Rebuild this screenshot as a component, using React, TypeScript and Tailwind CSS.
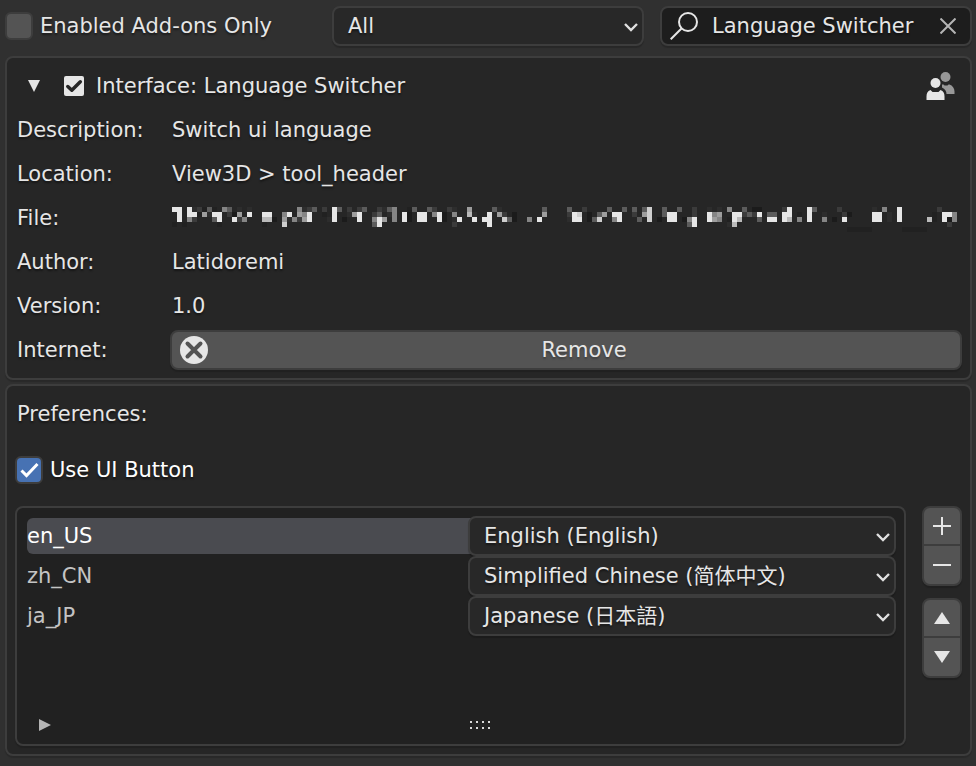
import { useState } from "react";

type Cell = [column: number, level: number];

// Brightness of each block of the obscured path, row by row.
const pathRows: Cell[][] = [
  [[0, 9], [1, 9], [3, 9], [4, 2], [5, 3], [6, 1], [7, 4], [8, 1], [10, 5], [11, 4], [13, 2], [15, 2], [25, 5], [26, 2], [27, 3], [28, 4], [30, 3], [32, 9], [33, 4], [35, 3], [37, 3], [38, 4], [41, 3], [42, 2], [43, 4], [44, 5], [47, 1], [48, 4], [51, 4], [52, 3], [55, 3], [56, 2], [59, 6], [64, 4], [65, 2], [74, 4], [79, 4], [82, 3], [87, 4], [90, 4], [92, 4], [94, 4], [95, 8], [98, 4], [101, 4], [104, 3], [107, 2], [109, 2], [111, 5], [114, 4], [116, 0], [117, 0], [122, 3], [123, 9], [127, 9], [128, 4], [133, 3], [140, 2], [142, 5], [145, 9], [153, 3]],
  [[1, 9], [3, 9], [4, 9], [5, 1], [6, 6], [7, 2], [8, 9], [9, 9], [11, 3], [12, 0], [13, 6], [15, 9], [18, 9], [19, 9], [22, 5], [23, 9], [25, 6], [26, 5], [27, 9], [30, 1], [32, 9], [35, 2], [36, 6], [37, 9], [40, 3], [41, 4], [43, 2], [44, 5], [46, 9], [47, 0], [49, 9], [50, 9], [52, 5], [53, 9], [54, 0], [56, 5], [59, 7], [60, 2], [63, 9], [65, 6], [66, 3], [68, 0], [74, 6], [79, 3], [80, 9], [81, 8], [83, 0], [85, 4], [86, 6], [88, 9], [89, 9], [92, 3], [94, 6], [95, 8], [98, 4], [99, 9], [100, 9], [104, 3], [107, 9], [108, 5], [109, 6], [112, 9], [113, 9], [114, 3], [115, 4], [116, 3], [117, 9], [119, 4], [120, 4], [122, 9], [123, 9], [125, 1], [127, 9], [130, 2], [134, 3], [135, 0], [140, 9], [141, 9], [143, 2], [145, 9], [152, 1], [154, 9], [155, 9], [156, 5]],
  [[1, 9], [3, 5], [4, 3], [8, 4], [9, 9], [12, 9], [13, 3], [14, 5], [18, 7], [19, 7], [20, 0], [22, 6], [23, 2], [24, 5], [25, 3], [26, 6], [27, 9], [31, 2], [32, 9], [34, 0], [37, 9], [40, 5], [41, 9], [42, 6], [44, 5], [46, 9], [47, 0], [49, 9], [50, 9], [53, 9], [54, 0], [56, 2], [57, 9], [60, 9], [62, 9], [63, 9], [66, 8], [67, 4], [68, 0], [71, 5], [73, 9], [79, 2], [80, 9], [81, 9], [83, 0], [84, 4], [85, 8], [88, 5], [89, 9], [93, 4], [95, 8], [97, 0], [99, 9], [100, 9], [102, 0], [103, 5], [104, 9], [107, 9], [108, 6], [109, 5], [111, 1], [112, 9], [113, 7], [117, 4], [119, 9], [120, 9], [122, 9], [123, 7], [125, 5], [127, 9], [130, 5], [132, 0], [134, 9], [140, 9], [141, 9], [143, 2], [145, 9], [151, 7], [152, 1], [154, 9], [155, 0], [156, 5]],
  [[0, 1], [2, 1], [9, 1], [18, 1], [22, 8], [40, 4], [41, 9], [56, 3], [63, 9], [103, 4], [104, 9], [111, 2], [112, 7], [155, 3]],
  [[135, 1], [136, 1], [137, 1], [138, 1], [139, 1], [146, 1], [147, 1], [148, 1], [149, 1], [150, 1]],
];

const levels = ["#1b1b1b", "#212121", "#2d2d2d", "#3b3b3b", "#5c5c5c", "#858585", "#9d9d9d", "#bababa", "#cecece", "#e6e6e6"];

function ObscuredPath() {
  return (
    <svg viewBox="0 0 785 25" className="ml-0.5 mt-0.5 block h-[25px] w-[785px] max-w-full" shapeRendering="crispEdges" role="img" aria-label="Hidden file path">
      {pathRows.map((row, y) =>
        row.map(([x, level]) => (
          <rect key={`${x}-${y}`} x={x * 5} y={y * 5} width={5} height={5} fill={levels[level]} />
        ))
      )}
    </svg>
  );
}

function Dropdown({ label, options }: { label: string; options: string[] }) {
  return (
    <div className="relative h-10">
      <select
        aria-label={label}
        className="h-10 w-full appearance-none rounded-lg border-2 border-[#3d3d3d] bg-[#282828] pl-2.5 pr-8 indent-1 text-[#e6e6e6] shadow-[0_2px_1px_rgba(0,0,0,0.18)] outline-none [text-shadow:inherit]"
      >
        {options.map((option) => (
          <option key={option}>{option}</option>
        ))}
      </select>
      <svg viewBox="0 0 14 10" className="pointer-events-none absolute right-1.5 top-4 h-2.5 w-3.5" fill="none" stroke="#e0e0e0" strokeWidth="2.400">
        <path d="M1 2l6 6 6-6" />
      </svg>
    </div>
  );
}

function InfoRow({ label, children }: { label: string; children: React.ReactNode }) {
  return (
    <div className="grid h-11 grid-cols-[155px_1fr] items-center">
      <dt className="pl-0.5">{label}</dt>
      <dd className="min-w-0">{children}</dd>
    </div>
  );
}

const languages = [
  { code: "en_US", name: "English (English)" },
  { code: "zh_CN", name: "Simplified Chinese (简体中文)" },
  { code: "ja_JP", name: "Japanese (日本語)" },
];

const panel = "rounded-lg border-2 border-[#3d3d3d] bg-[#262626] px-2 shadow-[0_2px_1px_rgba(0,0,0,0.15)]";
const buttonGroup =
  "flex flex-col divide-y-2 divide-[#3d3d3d] overflow-hidden rounded-lg border-2 border-[#3d3d3d] bg-[#545454] shadow-[0_2px_1px_rgba(0,0,0,0.15)]";
const sideButton = "flex h-[38px] items-center justify-center";

export default function App() {
  const [active, setActive] = useState("en_US");

  return (
    <main className="min-h-screen bg-[#303030] pb-2.5 pl-[5px] pr-1 pt-1.5 font-['DejaVu_Sans','Noto_Sans_CJK_SC',sans-serif] text-[21px] leading-7 text-[#e6e6e6] [text-shadow:0_2px_2px_rgba(0,0,0,0.45)]">
      <header className="grid grid-cols-[1fr_312px_312px] gap-x-4">
        <label className="flex items-center gap-[7px] whitespace-nowrap">
          <input
            type="checkbox"
            className="size-7 shrink-0 appearance-none rounded-md border-2 border-[#3d3d3d] bg-[#545454] checked:bg-[#4772b3]"
          />
          Enabled Add-ons Only
        </label>
        <Dropdown label="Category" options={["All", "Interface"]} />
        <div className="flex h-10 items-center rounded-lg border-2 border-[#3d3d3d] bg-[#1d1d1d] pl-2 pr-3.5 shadow-[0_2px_1px_rgba(0,0,0,0.18)]">
          <svg viewBox="0 0 28 28" className="size-7 shrink-0" fill="none" stroke="#e6e6e6" strokeWidth="2">
            <circle cx="18" cy="10" r="9" />
            <path d="M11.500 16.500L.7 27.300" />
          </svg>
          <input
            aria-label="Search add-ons"
            defaultValue="Language Switcher"
            className="ml-3.5 min-w-0 flex-1 bg-transparent outline-none [text-shadow:inherit]"
          />
          <button type="button" aria-label="Clear search">
            <svg viewBox="0 0 16 16" className="size-4" fill="none" stroke="#b4b4b4" strokeWidth="2">
              <path d="M.5.5l15 15M15.500.5l-15 15" />
            </svg>
          </button>
        </div>
      </header>

      <section className={`${panel} mt-2.5 py-1.5`}>
        <div className="flex h-11 items-center pr-1.5">
          <button type="button" aria-label="Collapse details" className="ml-3 flex w-3.5 justify-center">
            <svg viewBox="0 0 12 12" className="size-3" fill="#e6e6e6">
              <path d="M0 0h12L6 12z" />
            </svg>
          </button>
          <label className="ml-[23px] flex items-center gap-3">
            <span className="relative size-5">
              <input type="checkbox" defaultChecked className="peer block size-5 appearance-none rounded-[2px] bg-[#e6e6e6]" />
              <svg viewBox="0 0 20 20" className="pointer-events-none absolute inset-0 hidden size-5 peer-checked:block" fill="none" stroke="#262626" strokeWidth="3.500" strokeLinecap="round" strokeLinejoin="round">
                <path d="M3.800 10.500l4 3.700 8.500-8.400" />
              </svg>
            </span>
            Interface: Language Switcher
          </label>
          <svg viewBox="0 0 30 28" className="ml-auto h-7 w-[30px]" role="img" aria-label="Community add-on">
            <g fill="#989898">
              <circle cx="19.500" cy="5" r="5" />
              <path d="M16 12.500h1.500l1 1h3l1-1h1c3 1 5 4 5 7V22h-8c0-3-1.500-5-4.500-6.500z" />
            </g>
            <g fill="#e6e6e6">
              <circle cx="9.500" cy="11" r="5" />
              <path d="M4.500 18l2 2h6l2-2c3 .8 4 3.500 4 6.500V28H.5v-3.500c0-3 1-5.700 4-6.500z" />
            </g>
          </svg>
        </div>
        <dl>
          <InfoRow label="Description:"><span className="pl-0.5">Switch ui language</span></InfoRow>
          <InfoRow label="Location:"><span className="pl-0.5">View3D &gt; tool_header</span></InfoRow>
          <InfoRow label="File:"><ObscuredPath /></InfoRow>
          <InfoRow label="Author:"><span className="pl-0.5">Latidoremi</span></InfoRow>
          <InfoRow label="Version:"><span className="pl-0.5">1.0</span></InfoRow>
          <InfoRow label="Internet:">
            <button type="button" className="flex h-10 w-full items-center rounded-lg border-2 border-[#3d3d3d] bg-[#545454] pl-2 shadow-[0_2px_1px_rgba(0,0,0,0.15)] [text-shadow:0_2px_2px_rgba(0,0,0,0.25)]">
              <svg viewBox="0 0 28 28" className="size-7">
                <circle cx="14" cy="14" r="14" fill="#e6e6e6" />
                <path d="M7.500 7.500l13 13M20.500 7.500l-13 13" fill="none" stroke="#545454" strokeWidth="4" strokeLinecap="round" />
              </svg>
              <span className="flex-1">Remove</span>
            </button>
          </InfoRow>
        </dl>
      </section>

      <section className={`${panel} mt-1 pb-2 pt-1.5`}>
        <h2 className="flex h-11 items-center pl-0.5">Preferences:</h2>
        <label className="mt-3 flex h-11 w-fit items-center gap-[7px] text-white">
          <span className="relative size-7">
            <input type="checkbox" defaultChecked className="peer block size-7 appearance-none rounded-md border-2 border-[#3d3d3d] bg-[#545454] checked:bg-[#4772b3]" />
            <svg viewBox="0 0 28 28" className="pointer-events-none absolute inset-0 hidden size-7 peer-checked:block" fill="none" stroke="#fff" strokeWidth="3">
              <path d="M6.500 14.500l5 5L22.500 8" />
            </svg>
          </span>
          Use UI Button
        </label>

        <div className="mt-3.5 flex items-start gap-4">
          <div className="flex min-h-60 flex-1 flex-col rounded-lg border-2 border-[#3d3d3d] bg-[#212121] pt-2 shadow-[0_2px_1px_rgba(0,0,0,0.15)]">
            <ul className="pl-2.5 pr-2">
              {languages.map(({ code, name }) => (
                <li key={code} className="grid grid-cols-[441fr_428fr] items-center">
                  <button
                    type="button"
                    onClick={() => setActive(code)}
                    className={`-mr-1 h-9 rounded-l-md text-left ${active === code ? "bg-[#4a4b50] text-white" : "text-[#c4c4c4]"}`}
                  >
                    {code}
                  </button>
                  <Dropdown label={`Language for ${code}`} options={[name]} />
                </li>
              ))}
            </ul>
            <div className="mt-auto flex h-[38px] items-center">
              <button type="button" aria-label="Show filter" className="flex w-[38px] justify-end pr-1">
                <svg viewBox="0 0 12 12" className="size-3" fill="#b4b4b4">
                  <path d="M0 0l12 6-12 6z" />
                </svg>
              </button>
              <div className="flex flex-1 justify-center">
                <svg viewBox="0 0 20 8" className="h-2 w-5" fill="#d8d8d8" shapeRendering="crispEdges" aria-hidden="true">
                  {[0, 6, 12, 18].map((x) => (
                    <path key={x} d={`M${x} 0h2v2h-2zM${x} 6h2v2h-2z`} />
                  ))}
                </svg>
              </div>
            </div>
          </div>

          <div className="flex w-10 flex-col gap-3">
            <div className={buttonGroup}>
              <button type="button" aria-label="Add language" className={sideButton}>
                <svg viewBox="0 0 18 18" className="size-[18px]" stroke="#e6e6e6" strokeWidth="2">
                  <path d="M9 0v18M0 9h18" />
                </svg>
              </button>
              <button type="button" aria-label="Remove language" className={sideButton}>
                <svg viewBox="0 0 18 18" className="size-[18px]" stroke="#e6e6e6" strokeWidth="2">
                  <path d="M0 9h18" />
                </svg>
              </button>
            </div>
            <div className={buttonGroup}>
              <button type="button" aria-label="Move up" className={sideButton}>
                <svg viewBox="0 0 16 12" className="h-3 w-4" fill="#e6e6e6">
                  <path d="M8 0l8 12H0z" />
                </svg>
              </button>
              <button type="button" aria-label="Move down" className={sideButton}>
                <svg viewBox="0 0 16 12" className="h-3 w-4" fill="#e6e6e6">
                  <path d="M0 0h16L8 12z" />
                </svg>
              </button>
            </div>
          </div>
        </div>
      </section>
    </main>
  );
}
